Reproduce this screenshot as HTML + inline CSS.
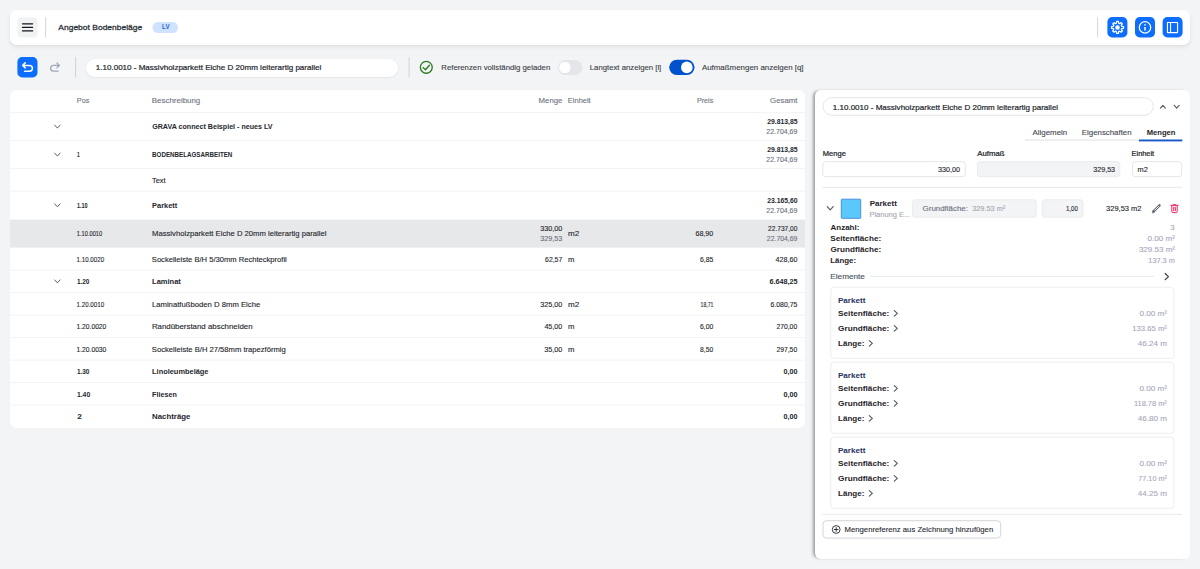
<!DOCTYPE html>
<html lang="de"><head><meta charset="utf-8"><title>Angebot Bodenbeläge</title>
<style>
html,body{margin:0;padding:0}
body{width:1200px;height:569px;overflow:hidden;background:#f3f4f6;position:relative;font-family:"Liberation Sans", sans-serif;}
body>div,body>svg,body>span{position:absolute;display:block}
body>span{left:0;white-space:nowrap;line-height:12px;height:12px;transform-origin:0 0}
</style></head><body>
<div style="left:10px;top:10px;width:1180px;height:35px;background:#fff;border-radius:6.5px;box-shadow:0 2.5px 4px -0.5px rgba(0,0,0,.075),0 1px 2px -1px rgba(0,0,0,.07)"></div>
<svg style="left:15px;top:15px" width="27" height="27"><rect x="2.40" y="2.20" width="20.1" height="20.3" rx="4.5" fill="#f1f2f4"/></svg>
<svg style="left:19px;top:21px" width="18" height="8"><rect x="2.90" y="2.20" width="11.3" height="1.25" rx="0.6" fill="#15171a"/></svg>
<svg style="left:19px;top:24px" width="18" height="8"><rect x="2.90" y="2.75" width="11.3" height="1.25" rx="0.6" fill="#15171a"/></svg>
<svg style="left:19px;top:28px" width="18" height="8"><rect x="2.90" y="2.25" width="11.3" height="1.25" rx="0.6" fill="#15171a"/></svg>
<svg style="left:43px;top:15px" width="7" height="27"><rect x="2.20" y="2.30" width="0.9" height="20.2" rx="0" fill="#cfd3d8"/></svg>
<svg style="left:150px;top:20px" width="32" height="17"><rect x="2.50" y="2.00" width="25.5" height="11" rx="5.5" fill="#cfe2ff"/></svg>
<svg style="left:1095px;top:15px" width="7" height="27"><rect x="2.20" y="2.30" width="0.9" height="20.2" rx="0" fill="#cfd3d8"/></svg>
<svg style="left:1105px;top:15px" width="26" height="27"><rect x="2.40" y="2.10" width="20" height="20.4" rx="4.8" fill="#0d6efd"/></svg>
<svg style="left:1133px;top:15px" width="26" height="27"><rect x="2.00" y="2.10" width="20" height="20.4" rx="4.8" fill="#0d6efd"/></svg>
<svg style="left:1160px;top:15px" width="26" height="27"><rect x="2.60" y="2.10" width="20" height="20.4" rx="4.8" fill="#0d6efd"/></svg>
<svg style="left:1107px;top:17px" width="21" height="21" viewBox="0 0 21 21" ><path d="M9.42 6.20L9.66 4.47L11.44 4.47L11.68 6.20L12.73 6.63L14.12 5.58L15.37 6.83L14.32 8.23L14.75 9.27L16.48 9.51L16.48 11.29L14.75 11.53L14.32 12.57L15.37 13.97L14.12 15.22L12.73 14.17L11.68 14.60L11.44 16.33L9.66 16.33L9.42 14.60L8.38 14.17L6.98 15.22L5.73 13.97L6.78 12.57L6.35 11.53L4.62 11.29L4.62 9.51L6.35 9.27L6.78 8.22L5.73 6.83L6.98 5.58L8.38 6.63Z" fill="none" stroke="#fff" stroke-width="1.25" stroke-linejoin="round"/><circle cx="10.55" cy="10.4" r="2.25" fill="#fff"/></svg>
<svg style="left:1135px;top:17px" width="21" height="21" viewBox="0 0 21 21" ><circle cx="10" cy="10.4" r="5.7" fill="none" stroke="#fff" stroke-width="1.25"/><path d="M10 9.9v3.6" stroke="#fff" stroke-width="1.5" fill="none"/><circle cx="10" cy="7.8" r="0.85" fill="#fff"/></svg>
<svg style="left:1162px;top:17px" width="21" height="21" viewBox="0 0 21 21" ><rect x="5.45" y="5.45" width="10.1" height="10.1" rx="0.3" fill="none" stroke="#fff" stroke-width="1.15"/><path d="M8.55 5.45v10.1" stroke="#fff" stroke-width="1.1"/></svg>
<svg style="left:15px;top:55px" width="27" height="27"><rect x="2.40" y="2.10" width="20.1" height="20.4" rx="4.8" fill="#0d6efd"/></svg>
<svg style="left:15px;top:55px" width="50" height="25" viewBox="15 55 50 25" fill="none" stroke-linecap="round" stroke-linejoin="round"><path d="M25.2 62.9L22.7 65.4L25.2 67.9M22.7 65.4H29.5A2.9 2.9 0 0 1 29.5 71.2H24.6" stroke="#fff" stroke-width="1.5"/><path d="M56.9 62.9L59.4 65.4L56.9 67.9M59.4 65.4H53.5A2.9 2.9 0 0 0 53.5 71.2H58.1" stroke="#9ca7b3" stroke-width="1.3"/></svg>
<svg style="left:73px;top:55px" width="7" height="27"><rect x="2.10" y="2.20" width="1.0" height="20.2" rx="0" fill="#cfd3d8"/></svg>
<div style="left:86px;top:58.5px;width:311.5px;height:18px;background:#fff;border-radius:9px;box-shadow:0 0.5px 2px rgba(0,0,0,.09)"></div>
<svg style="left:406px;top:55px" width="7" height="27"><rect x="2.60" y="2.20" width="1.0" height="20.2" rx="0" fill="#cfd3d8"/></svg>
<svg style="left:415px;top:56px" width="22" height="22" viewBox="415 56 22 22" fill="none" stroke="#2c7a1c" stroke-linecap="round" stroke-linejoin="round"><circle cx="426.3" cy="67.3" r="5.95" stroke-width="1.3"/><path d="M423.1 67.6L425.5 69.7L429.4 65.3" stroke-width="1.35"/></svg>
<svg style="left:555px;top:57px" width="31" height="21"><rect x="2.90" y="2.90" width="24.5" height="15" rx="7.5" fill="#e4e6e9"/></svg>
<svg style="left:555px;top:58px" width="20" height="20" viewBox="555 58 20 20"><circle cx="564.9" cy="67.7" r="6.1" fill="rgba(0,0,0,.06)"/><circle cx="564.9" cy="67.5" r="5.85" fill="#fff"/></svg>
<svg style="left:667px;top:57px" width="32" height="22"><rect x="2.20" y="2.80" width="25.3" height="15.1" rx="7.55" fill="#0052cc"/></svg>
<svg style="left:677px;top:58px" width="20" height="20" viewBox="677 58 20 20"><circle cx="686.8" cy="67.4" r="5.8" fill="#fff"/></svg>
<div style="left:10px;top:90px;width:795px;height:338px;background:#fff;border-radius:6.5px"></div>
<svg style="left:8px;top:217px" width="801" height="34"><rect x="2.00" y="2.60" width="795" height="28" rx="0" fill="#e7e8ea"/></svg>
<svg style="left:8px;top:110px" width="801" height="7"><rect x="2.00" y="2.15" width="795" height="1.0" rx="0" fill="#f2f3f5"/></svg>
<svg style="left:8px;top:138px" width="801" height="7"><rect x="2.00" y="2.15" width="795" height="1.0" rx="0" fill="#f2f3f5"/></svg>
<svg style="left:8px;top:166px" width="801" height="7"><rect x="2.00" y="2.15" width="795" height="1.0" rx="0" fill="#f2f3f5"/></svg>
<svg style="left:8px;top:188px" width="801" height="7"><rect x="2.00" y="2.65" width="795" height="1.0" rx="0" fill="#f2f3f5"/></svg>
<svg style="left:8px;top:267px" width="801" height="7"><rect x="2.00" y="2.65" width="795" height="1.0" rx="0" fill="#f2f3f5"/></svg>
<svg style="left:8px;top:290px" width="801" height="7"><rect x="2.00" y="2.15" width="795" height="1.0" rx="0" fill="#f2f3f5"/></svg>
<svg style="left:8px;top:312px" width="801" height="7"><rect x="2.00" y="2.65" width="795" height="1.0" rx="0" fill="#f2f3f5"/></svg>
<svg style="left:8px;top:335px" width="801" height="7"><rect x="2.00" y="2.15" width="795" height="1.0" rx="0" fill="#f2f3f5"/></svg>
<svg style="left:8px;top:357px" width="801" height="7"><rect x="2.00" y="2.65" width="795" height="1.0" rx="0" fill="#f2f3f5"/></svg>
<svg style="left:8px;top:380px" width="801" height="7"><rect x="2.00" y="2.15" width="795" height="1.0" rx="0" fill="#f2f3f5"/></svg>
<svg style="left:8px;top:402px" width="801" height="7"><rect x="2.00" y="2.65" width="795" height="1.0" rx="0" fill="#f2f3f5"/></svg>
<svg style="left:52px;top:123px" width="11" height="8" viewBox="52 123 11 8"><path d="M54.65 125.10L57.40 128.10L60.15 125.10" fill="none" stroke="#5c6067" stroke-width="1.0" stroke-linecap="round" stroke-linejoin="round"/></svg>
<svg style="left:52px;top:151px" width="11" height="8" viewBox="52 151 11 8"><path d="M54.65 153.10L57.40 156.10L60.15 153.10" fill="none" stroke="#5c6067" stroke-width="1.0" stroke-linecap="round" stroke-linejoin="round"/></svg>
<svg style="left:52px;top:201px" width="11" height="8" viewBox="52 201 11 8"><path d="M54.65 203.80L57.40 206.80L60.15 203.80" fill="none" stroke="#5c6067" stroke-width="1.0" stroke-linecap="round" stroke-linejoin="round"/></svg>
<svg style="left:52px;top:277px" width="11" height="8" viewBox="52 277 11 8"><path d="M54.65 279.90L57.40 282.90L60.15 279.90" fill="none" stroke="#5c6067" stroke-width="1.0" stroke-linecap="round" stroke-linejoin="round"/></svg>
<div style="left:815px;top:90px;width:375px;height:469px;background:#fff;border-radius:6px;box-shadow:-3px 0 3px -1px rgba(0,0,0,.34)"></div>
<svg style="left:821px;top:95px" width="337" height="24"><rect x="2.00" y="2.70" width="330.3" height="17.6" rx="8.8" fill="#fff" stroke="#e4e6e9" stroke-width="1"/></svg>
<svg style="left:1158px;top:103px" width="10" height="8" viewBox="1158 103 10 8"><path d="M1160.40 108.05L1162.90 105.35L1165.40 108.05" fill="none" stroke="#555b66" stroke-width="1.1" stroke-linecap="round" stroke-linejoin="round"/></svg>
<svg style="left:1172px;top:103px" width="10" height="8" viewBox="1172 103 10 8"><path d="M1174.20 105.45L1176.70 108.15L1179.20 105.45" fill="none" stroke="#555b66" stroke-width="1.1" stroke-linecap="round" stroke-linejoin="round"/></svg>
<svg style="left:1023px;top:137px" width="120" height="7"><rect x="2.00" y="2.60" width="114" height="0.9" rx="0" fill="#d9dce0"/></svg>
<svg style="left:1136px;top:137px" width="50" height="8"><rect x="2.90" y="2.50" width="43.4" height="1.9" rx="0" fill="#1856c9"/></svg>
<svg style="left:820px;top:159px" width="149" height="21"><rect x="2.80" y="2.70" width="142.5" height="15" rx="2.8" fill="#fff" stroke="#e4e6e9" stroke-width="1"/></svg>
<svg style="left:975px;top:159px" width="149" height="21"><rect x="2.50" y="2.70" width="142.3" height="15" rx="2.8" fill="#f3f4f6" stroke="#e9ebee" stroke-width="1"/></svg>
<svg style="left:1130px;top:159px" width="56" height="21"><rect x="2.50" y="2.70" width="49.2" height="15" rx="2.8" fill="#fff" stroke="#e4e6e9" stroke-width="1"/></svg>
<svg style="left:820px;top:184px" width="366" height="7"><rect x="2.50" y="2.80" width="359.6" height="1.0" rx="0" fill="#e6e8eb"/></svg>
<svg style="left:825px;top:204px" width="11" height="9" viewBox="825 204 11 9"><path d="M827.20 206.65L830.20 209.95L833.20 206.65" fill="none" stroke="#555b66" stroke-width="1.15" stroke-linecap="round" stroke-linejoin="round"/></svg>
<svg style="left:839px;top:197px" width="26" height="26"><rect x="2.30" y="2.20" width="19.4" height="19.1" rx="0.5" fill="#5ac8fa" stroke="#4a8fe0" stroke-width="1"/></svg>
<svg style="left:910px;top:197px" width="130" height="24"><rect x="2.40" y="2.80" width="123.8" height="17.4" rx="2.8" fill="#f3f4f6" stroke="#e9ebee" stroke-width="1"/></svg>
<svg style="left:1040px;top:197px" width="47" height="24"><rect x="2.30" y="2.80" width="40.7" height="17.4" rx="2.8" fill="#f3f4f6" stroke="#e9ebee" stroke-width="1"/></svg>
<svg style="left:1148px;top:200px" width="34" height="17" viewBox="1148 200 34 17" fill="none" stroke-linecap="round" stroke-linejoin="round"><path d="M1153.8 211.1L1159.5 205.4" stroke="#5d6774" stroke-width="2.45"/><path d="M1154.3 210.6L1159 205.9" stroke="#f1f4f6" stroke-width="1.0" stroke-linecap="butt"/><path d="M1152.2 212.8l0.7-2.3 1.6 1.6z" fill="#4d5663" stroke="#4d5663" stroke-width="0.4"/><g stroke="#ee1d58" stroke-width="0.95"><path d="M1170.9 205.3H1178.1"/><path d="M1173.2 205.2V205Q1173.2 204.6 1173.7 204.6H1175.3Q1175.8 204.6 1175.8 205V205.2"/><path d="M1171.8 205.4V211.5Q1171.8 212.6 1172.9 212.6H1176.1Q1177.2 212.6 1177.2 211.5V205.4"/><path d="M1173.7 207.1V210.8M1175.35 207.1V210.8"/></g></svg>
<svg style="left:868px;top:273px" width="291" height="7"><rect x="2.00" y="2.90" width="284.2" height="0.9" rx="0" fill="#e6e8eb"/></svg>
<svg style="left:1163px;top:271px" width="9" height="12" viewBox="1163 271 9 12"><path d="M1165.15 273.50L1168.45 276.60L1165.15 279.70" fill="none" stroke="#3b4048" stroke-width="1.2" stroke-linecap="round" stroke-linejoin="round"/></svg>
<svg style="left:828px;top:285px" width="350" height="78"><rect x="2.80" y="2.20" width="343.2" height="71.1" rx="3.2" fill="#fff" stroke="#eceef1" stroke-width="1"/></svg>
<svg style="left:892px;top:308px" width="9" height="11" viewBox="892 308 9 11"><path d="M894.25 310.60L897.35 313.40L894.25 316.20" fill="none" stroke="#4b5563" stroke-width="1.1" stroke-linecap="round" stroke-linejoin="round"/></svg>
<svg style="left:892px;top:323px" width="9" height="11" viewBox="892 323 9 11"><path d="M894.25 325.60L897.35 328.40L894.25 331.20" fill="none" stroke="#4b5563" stroke-width="1.1" stroke-linecap="round" stroke-linejoin="round"/></svg>
<svg style="left:867px;top:338px" width="9" height="11" viewBox="867 338 9 11"><path d="M869.25 340.60L872.35 343.40L869.25 346.20" fill="none" stroke="#4b5563" stroke-width="1.1" stroke-linecap="round" stroke-linejoin="round"/></svg>
<svg style="left:828px;top:360px" width="350" height="78"><rect x="2.80" y="2.20" width="343.2" height="71.1" rx="3.2" fill="#fff" stroke="#eceef1" stroke-width="1"/></svg>
<svg style="left:892px;top:383px" width="9" height="11" viewBox="892 383 9 11"><path d="M894.25 385.60L897.35 388.40L894.25 391.20" fill="none" stroke="#4b5563" stroke-width="1.1" stroke-linecap="round" stroke-linejoin="round"/></svg>
<svg style="left:892px;top:398px" width="9" height="11" viewBox="892 398 9 11"><path d="M894.25 400.60L897.35 403.40L894.25 406.20" fill="none" stroke="#4b5563" stroke-width="1.1" stroke-linecap="round" stroke-linejoin="round"/></svg>
<svg style="left:867px;top:413px" width="9" height="11" viewBox="867 413 9 11"><path d="M869.25 415.60L872.35 418.40L869.25 421.20" fill="none" stroke="#4b5563" stroke-width="1.1" stroke-linecap="round" stroke-linejoin="round"/></svg>
<svg style="left:828px;top:435px" width="350" height="78"><rect x="2.80" y="2.20" width="343.2" height="71.1" rx="3.2" fill="#fff" stroke="#eceef1" stroke-width="1"/></svg>
<svg style="left:892px;top:458px" width="9" height="11" viewBox="892 458 9 11"><path d="M894.25 460.60L897.35 463.40L894.25 466.20" fill="none" stroke="#4b5563" stroke-width="1.1" stroke-linecap="round" stroke-linejoin="round"/></svg>
<svg style="left:892px;top:473px" width="9" height="11" viewBox="892 473 9 11"><path d="M894.25 475.60L897.35 478.40L894.25 481.20" fill="none" stroke="#4b5563" stroke-width="1.1" stroke-linecap="round" stroke-linejoin="round"/></svg>
<svg style="left:867px;top:488px" width="9" height="11" viewBox="867 488 9 11"><path d="M869.25 490.60L872.35 493.40L869.25 496.20" fill="none" stroke="#4b5563" stroke-width="1.1" stroke-linecap="round" stroke-linejoin="round"/></svg>
<svg style="left:820px;top:511px" width="366" height="7"><rect x="2.50" y="2.80" width="359.6" height="1.0" rx="0" fill="#e6e8eb"/></svg>
<svg style="left:821px;top:518px" width="184" height="24"><rect x="2.00" y="2.70" width="177.7" height="17.4" rx="3.5" fill="#fff" stroke="#d3d6db" stroke-width="1"/></svg>
<svg style="left:830px;top:523px" width="13" height="13" viewBox="830 523 13 13" fill="none" stroke="#2a2d33"><circle cx="836.2" cy="529.5" r="3.9" stroke-width="0.95"/><path d="M836.2 527.2v4.6M833.9 529.5h4.6" stroke-width="0.95"/></svg>
<span style="top:22px;font-size:7.7px;color:#2d3138;-webkit-text-stroke:0.27px #2d3138;transform:translateX(58.31px) scaleX(1.1034);">Angebot Bodenbeläge</span>
<span style="top:21px;font-size:7.2px;color:#1f5fd0;font-weight:700;transform:translateX(162.10px) scaleX(0.8532);">LV</span>
<span style="top:62px;font-size:7.8px;color:#22252b;-webkit-text-stroke:0.2px #22252b;transform:translateX(95.80px) scaleX(1.0303);">1.10.0010 - Massivholzparkett Eiche D 20mm leiterartig parallel</span>
<span style="top:62px;font-size:7.2px;color:#383c43;-webkit-text-stroke:0.1px #383c43;transform:translateX(441.28px) scaleX(1.0818);">Referenzen vollständig geladen</span>
<span style="top:62px;font-size:7.2px;color:#383c43;-webkit-text-stroke:0.1px #383c43;transform:translateX(589.81px) scaleX(1.0770);">Langtext anzeigen [l]</span>
<span style="top:62px;font-size:7.2px;color:#383c43;-webkit-text-stroke:0.1px #383c43;transform:translateX(701.88px) scaleX(1.1016);">Aufmaßmengen anzeigen [q]</span>
<span style="top:95px;font-size:7.3px;color:#6f7682;-webkit-text-stroke:0.12px #6f7682;transform:translateX(76.81px) scaleX(0.9921);">Pos</span>
<span style="top:95px;font-size:7.3px;color:#6f7682;-webkit-text-stroke:0.12px #6f7682;transform:translateX(151.84px) scaleX(1.0852);">Beschreibung</span>
<span style="top:95px;font-size:7.3px;color:#6f7682;-webkit-text-stroke:0.12px #6f7682;transform:translateX(538.61px) scaleX(1.0686);">Menge</span>
<span style="top:95px;font-size:7.3px;color:#6f7682;-webkit-text-stroke:0.12px #6f7682;transform:translateX(567.87px) scaleX(1.0224);">Einheit</span>
<span style="top:95px;font-size:7.3px;color:#6f7682;-webkit-text-stroke:0.12px #6f7682;transform:translateX(696.88px) scaleX(0.9865);">Preis</span>
<span style="top:95px;font-size:7.3px;color:#6f7682;-webkit-text-stroke:0.12px #6f7682;transform:translateX(770.07px) scaleX(1.0754);">Gesamt</span>
<span style="top:121px;font-size:7.3px;color:#24272d;font-weight:700;transform:translateX(152.16px) scaleX(0.9756);">GRAVA connect Beispiel - neues LV</span>
<span style="top:116px;font-size:7.3px;color:#24272d;font-weight:700;transform:translateX(767.23px) scaleX(0.9359);">29.813,85</span>
<span style="top:126px;font-size:7.3px;color:#6b7280;-webkit-text-stroke:0.12px #6b7280;transform:translateX(766.35px) scaleX(0.9540);">22.704,69</span>
<span style="top:149px;font-size:7.3px;color:#24272d;font-weight:700;transform:translateX(77.07px) scaleX(0.6690);">1</span>
<span style="top:149px;font-size:7.3px;color:#24272d;font-weight:700;transform:translateX(152.10px) scaleX(0.8530);">BODENBELAGSARBEITEN</span>
<span style="top:144px;font-size:7.3px;color:#24272d;font-weight:700;transform:translateX(767.23px) scaleX(0.9359);">29.813,85</span>
<span style="top:154px;font-size:7.3px;color:#6b7280;-webkit-text-stroke:0.12px #6b7280;transform:translateX(766.35px) scaleX(0.9540);">22.704,69</span>
<span style="top:175px;font-size:7.3px;color:#24272d;-webkit-text-stroke:0.12px #24272d;transform:translateX(152.07px) scaleX(1.0114);">Text</span>
<span style="top:200px;font-size:7.3px;color:#24272d;font-weight:700;transform:translateX(77.02px) scaleX(0.7496);">1.10</span>
<span style="top:200px;font-size:7.3px;color:#24272d;font-weight:700;transform:translateX(152.04px) scaleX(1.0205);">Parkett</span>
<span style="top:195px;font-size:7.3px;color:#24272d;font-weight:700;transform:translateX(767.23px) scaleX(0.9347);">23.165,60</span>
<span style="top:205px;font-size:7.3px;color:#6b7280;-webkit-text-stroke:0.12px #6b7280;transform:translateX(766.35px) scaleX(0.9540);">22.704,69</span>
<span style="top:228px;font-size:7.3px;color:#24272d;-webkit-text-stroke:0.12px #24272d;transform:translateX(76.80px) scaleX(0.7835);">1.10.0010</span>
<span style="top:228px;font-size:7.3px;color:#24272d;-webkit-text-stroke:0.12px #24272d;transform:translateX(152.01px) scaleX(1.0518);">Massivholzparkett Eiche D 20mm leiterartig parallel</span>
<span style="top:223px;font-size:7.3px;color:#24272d;-webkit-text-stroke:0.12px #24272d;transform:translateX(540.28px) scaleX(0.9876);">330,00</span>
<span style="top:233px;font-size:7.3px;color:#6b7280;-webkit-text-stroke:0.12px #6b7280;transform:translateX(540.29px) scaleX(0.9876);">329,53</span>
<span style="top:228px;font-size:7.3px;color:#24272d;-webkit-text-stroke:0.12px #24272d;transform:translateX(567.94px) scaleX(1.1067);">m2</span>
<span style="top:228px;font-size:7.3px;color:#24272d;-webkit-text-stroke:0.12px #24272d;transform:translateX(695.44px) scaleX(0.9697);">68,90</span>
<span style="top:223px;font-size:7.3px;color:#24272d;-webkit-text-stroke:0.12px #24272d;transform:translateX(768.12px) scaleX(0.8999);">22.737,00</span>
<span style="top:233px;font-size:7.3px;color:#6b7280;-webkit-text-stroke:0.12px #6b7280;transform:translateX(766.87px) scaleX(0.9393);">22.704,69</span>
<span style="top:254px;font-size:7.3px;color:#24272d;-webkit-text-stroke:0.12px #24272d;transform:translateX(76.62px) scaleX(0.8474);">1.10.0020</span>
<span style="top:254px;font-size:7.3px;color:#24272d;-webkit-text-stroke:0.12px #24272d;transform:translateX(151.82px) scaleX(1.0399);">Sockelleiste B/H 5/30mm Rechteckprofil</span>
<span style="top:254px;font-size:7.3px;color:#24272d;-webkit-text-stroke:0.12px #24272d;transform:translateX(545.10px) scaleX(0.9386);">62,57</span>
<span style="top:254px;font-size:7.3px;color:#24272d;-webkit-text-stroke:0.12px #24272d;transform:translateX(567.88px) scaleX(1.0569);">m</span>
<span style="top:254px;font-size:7.3px;color:#24272d;-webkit-text-stroke:0.12px #24272d;transform:translateX(700.05px) scaleX(0.9375);">6,85</span>
<span style="top:254px;font-size:7.3px;color:#24272d;-webkit-text-stroke:0.12px #24272d;transform:translateX(775.59px) scaleX(0.9745);">428,60</span>
<span style="top:276px;font-size:7.3px;color:#24272d;font-weight:700;transform:translateX(76.89px) scaleX(0.8835);">1.20</span>
<span style="top:276px;font-size:7.3px;color:#24272d;font-weight:700;transform:translateX(152.04px) scaleX(1.0290);">Laminat</span>
<span style="top:276px;font-size:7.3px;color:#24272d;font-weight:700;transform:translateX(769.48px) scaleX(0.9906);">6.648,25</span>
<span style="top:299px;font-size:7.3px;color:#24272d;-webkit-text-stroke:0.12px #24272d;transform:translateX(76.62px) scaleX(0.8474);">1.20.0010</span>
<span style="top:299px;font-size:7.3px;color:#24272d;-webkit-text-stroke:0.12px #24272d;transform:translateX(151.90px) scaleX(1.0556);">Laminatfußboden D 8mm Eiche</span>
<span style="top:299px;font-size:7.3px;color:#24272d;-webkit-text-stroke:0.12px #24272d;transform:translateX(540.28px) scaleX(0.9876);">325,00</span>
<span style="top:299px;font-size:7.3px;color:#24272d;-webkit-text-stroke:0.12px #24272d;transform:translateX(567.94px) scaleX(1.1067);">m2</span>
<span style="top:299px;font-size:7.3px;color:#24272d;-webkit-text-stroke:0.12px #24272d;transform:translateX(700.53px) scaleX(0.7074);">18,71</span>
<span style="top:299px;font-size:7.3px;color:#24272d;-webkit-text-stroke:0.12px #24272d;transform:translateX(770.53px) scaleX(0.9434);">6.080,75</span>
<span style="top:321px;font-size:7.3px;color:#24272d;-webkit-text-stroke:0.12px #24272d;transform:translateX(76.53px) scaleX(0.9176);">1.20.0020</span>
<span style="top:321px;font-size:7.3px;color:#24272d;-webkit-text-stroke:0.12px #24272d;transform:translateX(151.90px) scaleX(1.0791);">Randüberstand abschneiden</span>
<span style="top:321px;font-size:7.3px;color:#24272d;-webkit-text-stroke:0.12px #24272d;transform:translateX(544.40px) scaleX(0.9754);">45,00</span>
<span style="top:321px;font-size:7.3px;color:#24272d;-webkit-text-stroke:0.12px #24272d;transform:translateX(567.88px) scaleX(1.0569);">m</span>
<span style="top:321px;font-size:7.3px;color:#24272d;-webkit-text-stroke:0.12px #24272d;transform:translateX(700.09px) scaleX(0.9307);">6,00</span>
<span style="top:321px;font-size:7.3px;color:#24272d;-webkit-text-stroke:0.12px #24272d;transform:translateX(776.41px) scaleX(0.9302);">270,00</span>
<span style="top:344px;font-size:7.3px;color:#24272d;-webkit-text-stroke:0.12px #24272d;transform:translateX(76.53px) scaleX(0.9176);">1.20.0030</span>
<span style="top:344px;font-size:7.3px;color:#24272d;-webkit-text-stroke:0.12px #24272d;transform:translateX(151.87px) scaleX(1.0451);">Sockelleiste B/H 27/58mm trapezförmig</span>
<span style="top:344px;font-size:7.3px;color:#24272d;-webkit-text-stroke:0.12px #24272d;transform:translateX(544.24px) scaleX(0.9844);">35,00</span>
<span style="top:344px;font-size:7.3px;color:#24272d;-webkit-text-stroke:0.12px #24272d;transform:translateX(567.88px) scaleX(1.0569);">m</span>
<span style="top:344px;font-size:7.3px;color:#24272d;-webkit-text-stroke:0.12px #24272d;transform:translateX(700.09px) scaleX(0.9160);">8,50</span>
<span style="top:344px;font-size:7.3px;color:#24272d;-webkit-text-stroke:0.12px #24272d;transform:translateX(776.41px) scaleX(0.9302);">297,50</span>
<span style="top:366px;font-size:7.3px;color:#24272d;font-weight:700;transform:translateX(76.89px) scaleX(0.8835);">1.30</span>
<span style="top:366px;font-size:7.3px;color:#24272d;font-weight:700;transform:translateX(152.04px) scaleX(1.0159);">Linoleumbeläge</span>
<span style="top:366px;font-size:7.3px;color:#24272d;font-weight:700;transform:translateX(783.52px) scaleX(0.9873);">0,00</span>
<span style="top:389px;font-size:7.3px;color:#24272d;font-weight:700;transform:translateX(76.91px) scaleX(0.9341);">1.40</span>
<span style="top:389px;font-size:7.3px;color:#24272d;font-weight:700;transform:translateX(152.09px) scaleX(0.9809);">Fliesen</span>
<span style="top:389px;font-size:7.3px;color:#24272d;font-weight:700;transform:translateX(783.52px) scaleX(0.9873);">0,00</span>
<span style="top:411px;font-size:7.3px;color:#24272d;font-weight:700;transform:translateX(77.20px) scaleX(1.1445);">2</span>
<span style="top:411px;font-size:7.3px;color:#24272d;font-weight:700;transform:translateX(152.04px) scaleX(1.0768);">Nachträge</span>
<span style="top:411px;font-size:7.3px;color:#24272d;font-weight:700;transform:translateX(783.52px) scaleX(0.9873);">0,00</span>
<span style="top:102px;font-size:7.8px;color:#22252b;-webkit-text-stroke:0.2px #22252b;transform:translateX(832.80px) scaleX(1.0297);">1.10.0010 - Massivholzparkett Eiche D 20mm leiterartig parallel</span>
<span style="top:127px;font-size:7.8px;color:#454a52;-webkit-text-stroke:0.12px #454a52;transform:translateX(1032.50px) scaleX(1.0134);">Allgemein</span>
<span style="top:127px;font-size:7.8px;color:#454a52;-webkit-text-stroke:0.12px #454a52;transform:translateX(1081.80px) scaleX(1.0074);">Eigenschaften</span>
<span style="top:127px;font-size:7.8px;color:#1f2328;font-weight:700;transform:translateX(1146.66px) scaleX(0.9770);">Mengen</span>
<span style="top:148px;font-size:7.5px;color:#24272d;-webkit-text-stroke:0.24px #24272d;transform:translateX(822.83px) scaleX(1.0023);">Menge</span>
<span style="top:148px;font-size:7.5px;color:#24272d;-webkit-text-stroke:0.24px #24272d;transform:translateX(977.32px) scaleX(1.0377);">Aufmaß</span>
<span style="top:148px;font-size:7.5px;color:#24272d;-webkit-text-stroke:0.24px #24272d;transform:translateX(1131.60px) scaleX(0.9821);">Einheit</span>
<span style="top:164px;font-size:7.5px;color:#24272d;-webkit-text-stroke:0.12px #24272d;transform:translateX(937.96px) scaleX(0.9643);">330,00</span>
<span style="top:164px;font-size:7.5px;color:#24272d;-webkit-text-stroke:0.12px #24272d;transform:translateX(1093.36px) scaleX(0.9463);">329,53</span>
<span style="top:164px;font-size:7.5px;color:#24272d;-webkit-text-stroke:0.12px #24272d;transform:translateX(1137.51px) scaleX(0.9847);">m2</span>
<span style="top:198px;font-size:7.5px;color:#1f2328;font-weight:700;transform:translateX(869.67px) scaleX(1.0670);">Parkett</span>
<span style="top:209px;font-size:7.8px;color:#a3a8b0;-webkit-text-stroke:0.12px #a3a8b0;transform:translateX(869.46px) scaleX(0.9584);">Planung E...</span>
<span style="top:203px;font-size:7.2px;color:#6b7280;-webkit-text-stroke:0.12px #6b7280;transform:translateX(922.60px) scaleX(1.1013);">Grundfläche:</span>
<span style="top:203px;font-size:7.2px;color:#a3a8b0;-webkit-text-stroke:0.12px #a3a8b0;transform:translateX(972.21px) scaleX(1.0209);">329.53 m²</span>
<span style="top:203px;font-size:7.5px;color:#24272d;-webkit-text-stroke:0.12px #24272d;transform:translateX(1065.95px) scaleX(0.8100);">1,00</span>
<span style="top:203px;font-size:7.8px;color:#24272d;-webkit-text-stroke:0.12px #24272d;transform:translateX(1106.06px) scaleX(0.9600);">329,53 m2</span>
<span style="top:222px;font-size:7.5px;color:#1f2328;font-weight:700;transform:translateX(830.47px) scaleX(1.0689);">Anzahl:</span>
<span style="top:222px;font-size:7.5px;color:#a9a8bc;-webkit-text-stroke:0.12px #a9a8bc;transform:translateX(1170.33px) scaleX(1.0481);">3</span>
<span style="top:233px;font-size:7.5px;color:#1f2328;font-weight:700;transform:translateX(830.23px) scaleX(1.0918);">Seitenfläche:</span>
<span style="top:233px;font-size:7.5px;color:#a9a8bc;-webkit-text-stroke:0.12px #a9a8bc;transform:translateX(1147.40px) scaleX(1.0855);">0.00 m²</span>
<span style="top:244px;font-size:7.5px;color:#1f2328;font-weight:700;transform:translateX(830.49px) scaleX(1.0876);">Grundfläche:</span>
<span style="top:244px;font-size:7.5px;color:#a9a8bc;-webkit-text-stroke:0.12px #a9a8bc;transform:translateX(1138.92px) scaleX(1.0679);">329.53 m²</span>
<span style="top:255px;font-size:7.5px;color:#1f2328;font-weight:700;transform:translateX(830.25px) scaleX(1.0508);">Länge:</span>
<span style="top:255px;font-size:7.5px;color:#a9a8bc;-webkit-text-stroke:0.12px #a9a8bc;transform:translateX(1148.31px) scaleX(0.9759);">137.3 m</span>
<span style="top:271px;font-size:7.5px;color:#4b5563;-webkit-text-stroke:0.12px #4b5563;transform:translateX(830.30px) scaleX(1.0921);">Elemente</span>
<span style="top:295px;font-size:7.5px;color:#27325e;font-weight:700;transform:translateX(837.96px) scaleX(1.0783);">Parkett</span>
<span style="top:308px;font-size:8px;color:#1f2328;font-weight:700;transform:translateX(838.00px) scaleX(1.0313);">Seitenfläche:</span>
<span style="top:308px;font-size:8px;color:#a9a8bc;-webkit-text-stroke:0.12px #a9a8bc;transform:translateX(1139.62px) scaleX(1.0081);">0.00 m²</span>
<span style="top:323px;font-size:8px;color:#1f2328;font-weight:700;transform:translateX(838.07px) scaleX(1.0304);">Grundfläche:</span>
<span style="top:323px;font-size:8px;color:#a9a8bc;-webkit-text-stroke:0.12px #a9a8bc;transform:translateX(1132.33px) scaleX(0.9582);">133.65 m²</span>
<span style="top:338px;font-size:8px;color:#1f2328;font-weight:700;transform:translateX(838.04px) scaleX(1.0052);">Länge:</span>
<span style="top:338px;font-size:8px;color:#a9a8bc;-webkit-text-stroke:0.12px #a9a8bc;transform:translateX(1137.77px) scaleX(1.0066);">46.24 m</span>
<span style="top:370px;font-size:7.5px;color:#27325e;font-weight:700;transform:translateX(837.96px) scaleX(1.0783);">Parkett</span>
<span style="top:383px;font-size:8px;color:#1f2328;font-weight:700;transform:translateX(838.00px) scaleX(1.0313);">Seitenfläche:</span>
<span style="top:383px;font-size:8px;color:#a9a8bc;-webkit-text-stroke:0.12px #a9a8bc;transform:translateX(1139.62px) scaleX(1.0081);">0.00 m²</span>
<span style="top:398px;font-size:8px;color:#1f2328;font-weight:700;transform:translateX(838.07px) scaleX(1.0304);">Grundfläche:</span>
<span style="top:398px;font-size:8px;color:#a9a8bc;-webkit-text-stroke:0.12px #a9a8bc;transform:translateX(1133.90px) scaleX(0.9302);">118.78 m²</span>
<span style="top:413px;font-size:8px;color:#1f2328;font-weight:700;transform:translateX(838.04px) scaleX(1.0052);">Länge:</span>
<span style="top:413px;font-size:8px;color:#a9a8bc;-webkit-text-stroke:0.12px #a9a8bc;transform:translateX(1137.77px) scaleX(1.0066);">46.80 m</span>
<span style="top:445px;font-size:7.5px;color:#27325e;font-weight:700;transform:translateX(837.96px) scaleX(1.0783);">Parkett</span>
<span style="top:458px;font-size:8px;color:#1f2328;font-weight:700;transform:translateX(838.00px) scaleX(1.0313);">Seitenfläche:</span>
<span style="top:458px;font-size:8px;color:#a9a8bc;-webkit-text-stroke:0.12px #a9a8bc;transform:translateX(1139.62px) scaleX(1.0081);">0.00 m²</span>
<span style="top:473px;font-size:8px;color:#1f2328;font-weight:700;transform:translateX(838.07px) scaleX(1.0304);">Grundfläche:</span>
<span style="top:473px;font-size:8px;color:#a9a8bc;-webkit-text-stroke:0.12px #a9a8bc;transform:translateX(1138.22px) scaleX(0.9109);">77.10 m²</span>
<span style="top:488px;font-size:8px;color:#1f2328;font-weight:700;transform:translateX(838.04px) scaleX(1.0052);">Länge:</span>
<span style="top:488px;font-size:8px;color:#a9a8bc;-webkit-text-stroke:0.12px #a9a8bc;transform:translateX(1137.77px) scaleX(1.0066);">44.25 m</span>
<span style="top:524px;font-size:7.2px;color:#2a2d33;-webkit-text-stroke:0.12px #2a2d33;transform:translateX(844.60px) scaleX(1.0715);">Mengenreferenz aus Zeichnung hinzufügen</span>
</body></html>
